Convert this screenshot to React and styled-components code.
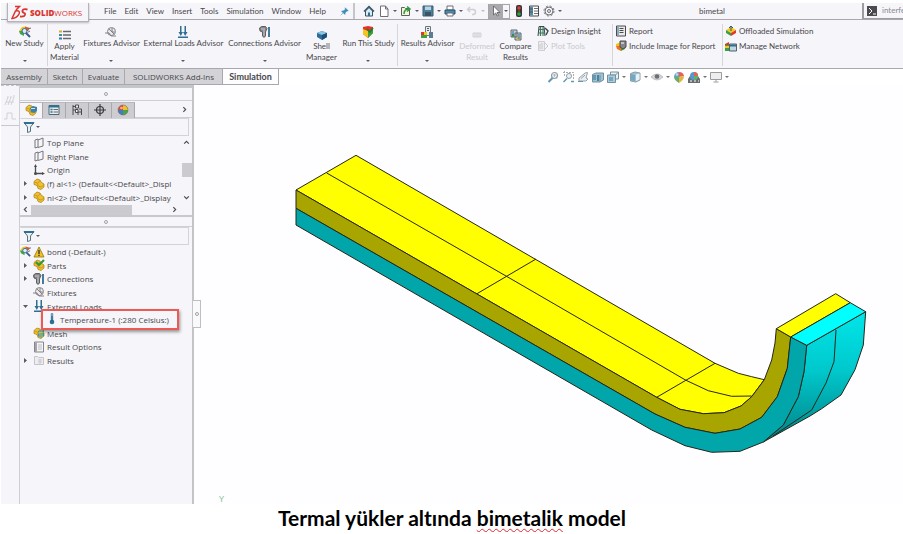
import React from "react";
import styled, { createGlobalStyle } from "styled-components";

const GlobalStyle = createGlobalStyle`
  *, *::after {
    box-sizing: border-box;
  }
  body {
    margin: 0;
    background: #fff;
    color: #48484c;
    font-family: Lato, "Open Sans", sans-serif;
    font-size: 8px;
    line-height: 11px;
  }
  button, input {
    margin: 0;
    padding: 0;
    border: 0;
    background: none;
    color: inherit;
    font: inherit;
  }
  ul {
    margin: 0;
    padding: 0;
    list-style: none;
  }
  svg {
    flex: none;
  }
`;

const Page = styled.div`
  padding: 3px 0 0 1px;
  overflow: hidden;
`;

const TitleBar = styled.header`
  display: flex;
  align-items: center;
  height: 17px;
  background: #f6f5f9;
  border-bottom: 1px solid #a9a9ad;
`;

const Brand = styled.div`
  align-self: flex-start;
  flex: none;
  display: flex;
  align-items: center;
  gap: 2px;
  width: 82px;
  height: 19px;
  margin: 0 15px 0 6px;
  padding-left: 3px;
  position: relative;
  background: #f6f5f9;
  border: 1px solid #b4b4b8;
  border-top: 0;
  box-shadow: 0 1px 2px rgba(0, 0, 0, 0.25);
  color: #d9352f;
  white-space: nowrap;
`;

const BrandName = styled.span`
  font-family: "Open Sans", sans-serif;
  font-size: 8px;
  b {
    font-weight: 800;
  }
`;

const MenuBar = styled.nav`
  display: flex;
  flex: none;
  gap: 8px;
  margin-right: 14px;
`;

const QuickBar = styled.div`
  display: flex;
  flex: none;
  align-items: center;
  gap: 3px;
  height: 16px;
  margin-left: 4px;
  padding-left: 8px;
  border-left: 2px solid #c6c6ca;
`;

const IconButton = styled.button`
  display: flex;
  flex: none;
  align-items: center;
  opacity: ${props => (props.$faded ? 0.35 : 1)};
`;

const SelectTool = styled.div`
  display: flex;
  align-items: center;
  height: 15px;
  gap: 1px;
  padding-right: 1px;
  border: 1px solid #a5a5aa;
  ${IconButton}:first-child {
    height: 13px;
    padding: 0 1px;
    background: #a9a9ae;
  }
`;

const DocumentName = styled.div`
  flex: 1;
  text-align: center;
`;

const SearchBox = styled.label`
  display: flex;
  flex: none;
  align-items: center;
  gap: 4px;
  width: 41px;
  height: 16px;
  padding-left: 2px;
  border-left: 2px solid #9c9ca1;
  border-bottom: 1px solid #9c9ca1;
  overflow: hidden;
  input {
    flex: 1;
    min-width: 0;
    color: #8a8a8e;
  }
`;

const Ribbon = styled.div`
  display: grid;
  grid-template-columns: 46px 34px 60px 84px 78px 36px 58px 60px 39px 38px 78px 110px 1fr;
  height: 49px;
  background: #f6f5f9;
  border-bottom: 1px solid #a9a9ad;
`;

const RibbonCell = styled.div`
  display: flex;
  flex-direction: column;
  align-items: ${props => (props.$list ? "flex-start" : "center")};
  gap: ${props => (props.$list ? "3px" : "0")};
  margin-top: 4px;
  height: 42px;
  padding: ${props => (props.$list ? "1px 0 0 2px" : "0")};
  border-left: 1px solid ${props => (props.$divided ? "#d6d6da" : "transparent")};
`;

const RibbonButton = styled.button`
  display: flex;
  flex-direction: column;
  align-items: center;
  padding-top: ${props => (props.$tall ? "5px" : "2px")};
  white-space: pre;
  color: ${props => (props.$faded ? "#c9c9cd" : "inherit")};
`;

const DropSpace = styled.span`
  display: flex;
  align-items: flex-end;
  height: 14px;
`;

const CommandButton = styled.button`
  display: flex;
  align-items: center;
  gap: 2px;
  height: 12px;
  white-space: nowrap;
  color: ${props => (props.$faded ? "#c9c9cd" : "inherit")};
`;

const TabRow = styled.div`
  display: flex;
  height: 16px;
`;

const CommandTab = styled.button`
  flex: none;
  width: ${props => props.$width}px;
  font-family: ${props => (props.$active ? "inherit" : '"Open Sans", sans-serif')};
  font-size: ${props => (props.$active ? 9 : 8)}px;
  font-weight: ${props => (props.$active ? 700 : 400)};
  border: 1px solid #a9a9ad;
  border-left: 0;
  border-top: 0;
  white-space: nowrap;
  background: ${props => (props.$active ? "#fdfcfe" : "#d3d3d7")};
`;

const ViewTools = styled.div`
  display: flex;
  align-items: center;
  gap: 3px;
  margin-left: 268px;
  opacity: 0.85;
`;

const Workspace = styled.main`
  display: flex;
  min-height: 419px;
`;

const SideStrip = styled.div`
  flex: none;
  width: 18px;
  background: #f6f5f9;
`;

const SideTools = styled.div`
  display: flex;
  flex-direction: column;
  align-items: center;
  gap: 4px;
  height: 41px;
  padding-top: 8px;
  border-top: 1px dashed #c4c4c8;
  border-bottom: 1px solid #c9c9cd;
`;

const Panel = styled.aside`
  flex: none;
  width: 175px;
  background: #f6f5f9;
  border-left: 1px solid #cfcfd3;
  border-right: 2px solid #c3c3c8;
  position: relative;
`;

const PanelTop = styled.div`
  border-top: 3px solid #c3c7ca;
  border-bottom: 2px solid #c9c9cd;
`;

const Grip = styled.div`
  display: flex;
  align-items: center;
  justify-content: center;
  height: ${props => props.$height}px;
  border-bottom: 1px solid #cfcfd3;
  &::after {
    content: "";
    width: 4px;
    height: 4px;
    border: 1px solid #a2a2a6;
    border-radius: 2px;
  }
`;

const PanelTabs = styled.div`
  display: flex;
  align-items: center;
  height: 17px;
  padding-top: 1px;
  border-bottom: 1px solid #cfcfd3;
`;

const PanelTab = styled.button`
  display: flex;
  align-items: center;
  justify-content: center;
  width: 23px;
  height: 16px;
  border-right: 1px solid #a9a9ad;
  border-top: 1px solid #b9b9bd;
  background: ${props => (props.$active ? "#f6f5f9" : "#cdcdd1")};
`;

const MoreTabs = styled.button`
  margin: 0 4px 0 auto;
  display: flex;
`;

const Filter = styled.label`
  display: flex;
  align-items: center;
  gap: 1px;
  height: 18px;
  margin: 0 3px 0 0;
  padding-left: 2px;
  border: 1px solid #d3d3d8;
  border-left-color: transparent;
  input {
    flex: 1;
    min-width: 0;
  }
`;

const TreeArea = styled.div`
  display: flex;
`;

const Tree = styled.ul`
  display: flex;
  flex: 1;
  flex-direction: column;
  min-width: 0;
  height: ${props => props.$height}px;
  font-family: "Open Sans", sans-serif;
`;

const TreeRow = styled.li`
  display: flex;
  flex: 1;
  align-items: center;
  gap: 2px;
  min-height: 0;
  white-space: nowrap;
  position: relative;
`;

const Expander = styled.button`
  display: flex;
  flex: none;
  justify-content: center;
  width: 11px;
`;

/* call-out lying over the neighbouring tree rows */
const Highlight = styled.div`
  position: absolute;
  z-index: 1;
  left: 21px;
  top: -4px;
  display: flex;
  align-items: center;
  gap: 2px;
  width: 138px;
  height: 21px;
  padding-left: 3px;
  background: #f6f5f9;
  border: 2px solid #ec5a56;
  box-shadow: 1px 2px 3px rgba(0, 0, 0, 0.4);
`;

const ScrollColumn = styled.div`
  display: flex;
  flex: none;
  flex-direction: column;
  align-items: center;
  justify-content: space-between;
  width: 11px;
  padding: 3px 0;
`;

const ScrollRow = styled.div`
  display: flex;
  align-items: center;
  height: 11px;
  padding: 0 14px 0 2px;
`;

const Thumb = styled.div`
  background: #cbcbcf;
  width: ${props => props.$width}px;
  height: ${props => props.$height}px;
  margin-right: ${props => (props.$wide ? "auto" : "0")};
  margin-left: ${props => (props.$wide ? "2px" : "0")};
`;

const Handle = styled.button`
  position: absolute;
  left: 173px;
  top: 215px;
  display: flex;
  align-items: center;
  justify-content: center;
  width: 8px;
  height: 28px;
  background: #f9f8fb;
  border: 1px solid #bdbdc2;
  border-left: 0;
`;

const Viewport = styled.section`
  flex: 1;
  min-width: 0;
  background: #fefdff;
  svg {
    display: block;
    width: 100%;
  }
`;

const Caption = styled.h1`
  margin: 0;
  font-size: 21px;
  line-height: 28px;
  font-weight: 700;
  font-variant-ligatures: none;
  text-align: center;
  color: #000;
  span {
    text-decoration: underline wavy #e3262b 1px;
    text-decoration-skip-ink: none;
    text-underline-offset: 2px;
  }
`;

const blue = "#2f6f92";
const grey = "#6e6e73";

const Heat = () => (
  <>
    <path d="M1 4 6 2v4H1z" fill="#f3c31c" />
    <path d="M6 2l5 2v2H6z" fill="#e2342d" />
    <path d="M1 6h5v5L2 9z" fill="#f0711f" />
    <path d="M6 6h5L10 9 6 11z" fill="#3fa93c" />
  </>
);

const Part = () => (
  <>
    <path
      d="M1 3.500L4 1l3 1 1 2 3 2v3l-3 2.500-3-1-1-3-3-1z"
      fill="#f0c02c"
      stroke="#a67d18"
      strokeWidth=".7"
    />
    <path d="M1.500 4l3 1L7.500 3M4.500 5l.5 3 3 1 3-2" stroke="#c4931c" strokeWidth=".8" fill="none" />
  </>
);

const Arrows = () => (
  <path
    d="M3 0h1.500v6H6l-2.200 4L1.500 6H3zM7.500 0H9v6h1.500L8.200 10 6 6h1.500zM1 10.500h10V12H1z"
    fill={blue}
  />
);

const Bolt = () => (
  <>
    <path d="M.5 2l2-1.500h4L8 2.500 6.500 6v4L5 11.500 3.500 10V6L1 5z" fill="#85858a" stroke="#48484d" strokeWidth=".8" />
    <path d="M2 3h4M5 4v6" stroke="#dcdce0" strokeWidth=".8" />
    <path d="M10 1v10" stroke={blue} strokeWidth="1.800" />
  </>
);

const Clip = () => (
  <>
    <circle cx="6.500" cy="5.500" r="4" fill="#e9e9ec" stroke="#88888d" />
    <path d="M0 7h4l2 3h5M4 3l5 5M7 2v4h3" fill="none" stroke="#77777c" strokeWidth=".9" />
  </>
);

const Doc = () => (
  <path d="M2.500 1h5l2.500 3v7.500H2.500zM7.500 1v3H10" fill="#fff" stroke={grey} />
);

const shapes = {
  study: (
    <>
      <path d="M0 5l3-4 3-.5L6 5z" fill="#f0c51e" />
      <path d="M0 5h5v5L1 8z" fill="#47a444" />
      <path d="M6 .5L11 2 9 5H6z" fill="#e2562d" />
      <circle cx="5.500" cy="5" r="2.500" fill="#d6ecf5" stroke={blue} />
      <path d="M7 7l4 4" stroke="#3b5a8c" strokeWidth="2" />
      <path d="M8.500 6.500L11 5M9 3l3-1" stroke="#6e6e73" />
    </>
  ),
  material: (
    <>
      <path d="M0 1.500h3v2H0z" fill="#e3a62b" />
      <path d="M0 5h3v2H0z" fill="#3f8f98" />
      <path d="M0 8.500h3v2H0z" fill="#3c72b0" />
      <path d="M4 2.500h8M4 6h8M4 9.500h8" stroke="#67676c" strokeWidth="1.400" />
    </>
  ),
  fixture: <Clip />,
  loads: <Arrows />,
  bolt: <Bolt />,
  shell: (
    <>
      <path d="M1 4l5-2 5 2v4l-5 3-5-3z" fill="#2b6d9d" />
      <path d="M1 4l5-2 5 2-5 2z" fill="#8dc3e0" />
      <path d="M6 6l5-2v4l-5 3z" fill="#1d4e78" />
    </>
  ),
  run: (
    <>
      <path d="M1 1l5-1 5 1v6l-5 5-5-4z" fill="#e3352c" />
      <path d="M1 3l5 2v7L1 8z" fill="#f1c61e" />
      <path d="M6 6l5-3v4l-5 5z" fill="#39a23a" />
      <path d="M5 3l3 3 3-4" stroke="#1d7e2b" strokeWidth="1.500" fill="none" />
    </>
  ),
  results: (
    <>
      <path d="M4.500.5h5v9h-5z" fill="#e8edf0" stroke="#6a7780" />
      <path d="M6 2.500h2M6 4.500h2" stroke="#59595e" />
      <path d="M0 6h3v3H0z" fill="#e3352c" />
      <path d="M3 6h3v3H3z" fill="#f1c61e" />
      <path d="M0 9h6v3H0z" fill="#39a23a" />
      <path d="M8 6h4v6H8z" fill="#5d7c90" />
    </>
  ),
  deformed: <path d="M2 4h8v4H2zM4 4v4M6 4v4M8 4v4" fill="#ececef" stroke="#d2d2d6" />,
  compare: (
    <>
      <path d="M1 1h6v7H1zM5 4h6v7H5z" fill="#c6ced2" stroke="#566872" />
      <path d="M2 5h2v3H2z" fill="#38a03b" />
      <path d="M7 8h2v3H7z" fill="#e5a91f" />
      <path d="M3 2v5M9 5v5" stroke={blue} />
    </>
  ),
  insight: (
    <>
      <path d="M1 11l1-9.500h5L8 11" fill="#d6e5e1" stroke="#364b50" />
      <path d="M1 8h7M3.500 2v9M6 2v9M2 4.500h5" stroke="#47765f" />
      <path d="M8 3l3 3-2 4" fill="none" stroke="#364b50" strokeWidth="1.400" />
    </>
  ),
  plot: (
    <>
      <path d="M1.500 1.500h6v9h-6z" fill="#ececef" stroke="#cfcfd3" />
      <path d="M3 4v5M5 3v6M7 10l4-4M8 3l3 3" stroke="#c9c9cd" />
    </>
  ),
  report: (
    <>
      <path d="M1.500 1h9v10h-9z" fill="#e9e9ec" stroke="#4b4b50" />
      <path d="M4.500 3.500h4M4.500 5.500h4M4.500 7.500h4" stroke="#4b4b50" />
      <path d="M3 2v8" stroke={blue} />
    </>
  ),
  image: (
    <>
      <Heat />
      <path d="M5 1h6v6l-3 2-3-2z" fill="#86868c" stroke="#4b4b50" />
      <path d="M6 3h3" stroke="#fff" />
    </>
  ),
  offload: (
    <>
      <path d="M1 5l5-3 5 3-5 3z" fill="#f1c61e" />
      <path d="M1 5l5 3v3L1 8z" fill="#39a23a" />
      <path d="M6 8l5-3v3l-5 3z" fill="#e3352c" />
      <path d="M6 1v5M4 3l2-2 2 2" stroke="#26597a" fill="none" />
    </>
  ),
  network: (
    <>
      <path d="M0 4h4v7H0z" fill="#39a23a" />
      <path d="M0 4l4-2v3H0z" fill="#e3352c" />
      <path d="M0 6h4v2H0z" fill="#f1c61e" />
      <path d="M4.500 4h7v7h-7z" fill="#c3d5de" stroke="#476577" />
      <path d="M5 5.500h6" stroke={blue} strokeWidth="2" />
    </>
  ),
  pin: (
    <path d="M7 1l4 4-2 .5-2 2L6.500 10 2 5.500 5 5l2-2zM4 8l-3 3" fill="#3c8cba" stroke="#3c8cba" strokeWidth=".7" />
  ),
  home: (
    <>
      <path d="M2.500 6v5h7V6L6 2.500z" fill="#dfe9ef" stroke="#33566b" />
      <path d="M1 6.500l5-5 5 5" stroke="#33566b" strokeWidth="1.500" fill="none" />
      <path d="M5 7.500h2V11H5z" fill={blue} />
    </>
  ),
  doc: <Doc />,
  open: (
    <>
      <path d="M1.500 2.500h3l1 1h4v7h-8z" fill="#f3f3e4" stroke="#5d6450" />
      <path d="M4 9c0-4 2-5 5-5M7 1.500L10 4 7 6.500" stroke="#34993a" strokeWidth="1.500" fill="none" />
    </>
  ),
  save: (
    <>
      <path d="M1 1h10v10H1z" fill="#4c7f9c" stroke="#3b5f74" />
      <path d="M3 1.500h6V5H3z" fill="#b9d4e1" />
      <path d="M3 7h6v4H3z" fill="#3d5361" />
    </>
  ),
  print: (
    <>
      <path d="M3 1h6v4H3z" fill="#fff" stroke={grey} />
      <path d="M1 5h10v4H1z" fill="#4688ad" stroke="#2b5069" />
      <path d="M3 8h6v3H3z" fill="#fff" stroke={grey} />
    </>
  ),
  undo: (
    <path d="M4 2L1.500 4.500 4 7M2 4.500h5a2.500 2.500 0 010 5H6" stroke="#88888d" strokeWidth="1.400" fill="none" />
  ),
  cursor: <path d="M3.500 1v9l2.200-2 1.500 3 1.300-.7L7 7.500h3z" fill="#fff" stroke="#5b5b60" strokeWidth=".8" />,
  traffic: (
    <>
      <rect x="3" y="0" width="6" height="12" rx="2" fill="#33373a" />
      <circle cx="6" cy="3" r="1.800" fill="#e23a30" />
      <circle cx="6" cy="6" r="1" fill="#6b5b20" />
      <circle cx="6" cy="9" r="1.800" fill="#31a544" />
    </>
  ),
  props: (
    <>
      <path d="M1.500 1h9v10h-9z" fill="#fff" stroke="#4b4b50" />
      <path d="M2 1.500h3v9H2z" fill="#5a8aa4" />
      <path d="M6 3.500h4M6 6h4M6 8.500h4M2 4h3M2 7h3" stroke="#4b4b50" strokeWidth=".8" />
    </>
  ),
  gear: (
    <>
      <circle cx="6" cy="6" r="4" fill="none" stroke={grey} strokeWidth="1" />
      <circle cx="6" cy="6" r="1.500" fill="none" stroke={grey} />
      <circle cx="6" cy="6" r="5" fill="none" stroke={grey} strokeWidth="1" strokeDasharray="2 1.930" />
    </>
  ),
  terminal: (
    <>
      <path d="M1 1h10v10H1z" fill="#4a4a4f" />
      <path d="M3 3l3 3-3 3M7 9h3" stroke="#fff" fill="none" />
    </>
  ),
  zoomFit: (
    <>
      <circle cx="7.500" cy="4.500" r="3" fill="#e7f0f5" stroke="#7f8f99" strokeWidth="1.200" />
      <path d="M6 4h3M7.500 3v3" stroke="#7f8f99" strokeWidth=".6" />
      <path d="M5.500 7l-4 4" stroke="#4b86a8" strokeWidth="2" />
    </>
  ),
  zoomArea: (
    <>
      <path d="M1 1.500h10.500V8M2.500 0v5" stroke="#a0a0a5" fill="none" strokeDasharray="2 1" />
      <circle cx="7" cy="5" r="2.500" fill="#e7f0f5" stroke="#7f8f99" />
      <path d="M5 7.500l-3.500 3.500M9 10.500h3" stroke="#4b86a8" strokeWidth="1.500" />
    </>
  ),
  prevView: (
    <>
      <path d="M2 7l6-5 2.500-.5L9 7l2 1-2 2H2z" fill="#e6ecef" stroke="#87959d" />
      <path d="M4 7.500L8 4" stroke="#87959d" />
      <path d="M1 10.500h5" stroke="#4b86a8" />
    </>
  ),
  section: (
    <>
      <path d="M.5 3.500L4 2h7.500v7L8 11H.5z" fill="#8bb8cd" stroke="#5a7c8e" />
      <path d="M4 2v7M1 4h3v5H1z" fill="#4d87a6" />
      <path d="M5 4h2v6H5z" fill="#2f6a8b" />
      <path d="M8 4v6" stroke="#5a7c8e" />
    </>
  ),
  cube: (
    <>
      <path d="M3.500 1h8v7h-3V4h-5z" fill="#e4eff4" stroke="#5f7d8e" />
      <path d="M.5 4h8v7.500h-8z" fill="#9cc4d7" stroke="#5f7d8e" />
      <path d="M3.500 1v3M8.500 4l3-3" stroke="#5f7d8e" />
      <path d="M2 6h4v4H2z" fill="#5b98b7" />
    </>
  ),
  display: (
    <>
      <path d="M1.500 2.500L6 1l5 1v7l-4 2-5.500-1z" fill="#8fb8cb" stroke="#7a8f9b" />
      <path d="M2 3l4 1v6L2 9.500z" fill="#5e9aba" />
      <path d="M7 3.500l3.500-1v6L7 10z" fill="#e4f1f7" />
    </>
  ),
  eye: (
    <>
      <path d="M0 6q6-6 12 0-6 6-12 0z" fill="#cfcfd3" stroke="#a2a2a7" strokeWidth=".7" />
      <circle cx="6" cy="5.500" r="2.300" fill="#50585e" />
    </>
  ),
  ball: (
    <>
      <circle cx="6" cy="6" r="5" fill="#e2453a" />
      <path d="M6 6V1a5 5 0 015 5z" fill="#f0c420" />
      <path d="M6 6h5a5 5 0 01-5 5z" fill="#40a648" />
      <path d="M6 6v5a5 5 0 01-5-5z" fill="#3d7ec0" />
      <circle cx="6" cy="6" r="5" fill="none" stroke="#77777c" strokeWidth=".6" />
      <circle cx="4.500" cy="4" r="1.300" fill="#fff" opacity=".6" />
    </>
  ),
  appearance: (
    <>
      <path d="M6 6L1 6a5 5 0 015-5z" fill="#4d90c6" />
      <path d="M6 6V1a5 5 0 015 4z" fill="#e2453a" />
      <path d="M6 6l5-1q0 4-5 7z" fill="#e0a81f" />
      <path d="M6 6v6Q1 9 1 6z" fill="#48a450" />
      <circle cx="4" cy="3.500" r="1.300" fill="#fff" opacity=".6" />
    </>
  ),
  scene: (
    <>
      <path d="M0 8l2-3h8l2 3v4H0z" fill="#50545a" />
      <path d="M2 10h2M6 10h2M10 10h1" stroke="#fff" />
      <circle cx="6" cy="5" r="4" fill="#3b86c5" />
      <path d="M6 5V1a4 4 0 014 4z" fill="#e2453a" />
      <path d="M6 5h4a4 4 0 01-4 4z" fill="#40a648" />
    </>
  ),
  monitor: (
    <>
      <path d="M.5 1.500h11v7H.5z" fill="#e9ecee" stroke="#8b8b90" />
      <path d="M6 8.500v2M3.500 11h5" stroke="#8b8b90" />
    </>
  ),
  assembly: (
    <>
      <Part />
      <path d="M5 4l3-2 4 1v4L9 9 6 8z" fill="#3c82a8" />
      <path d="M6 4.500h4" stroke="#cfe5f0" />
    </>
  ),
  manager: (
    <>
      <path d="M1 1.500h10v9H1z" fill="#e4ecf0" stroke="#4d6878" />
      <path d="M1 2.500h10" stroke={blue} strokeWidth="2" />
      <path d="M2.500 5.500h2M2.500 8h2" stroke={blue} strokeWidth="1.500" />
      <path d="M5.500 5.500H10M5.500 8H10" stroke="#6a6a6f" />
    </>
  ),
  config: (
    <>
      <path d="M2 1v10M2 2.500h3M2 6h3" stroke="#4b4b50" />
      <path d="M4.500 1h3v3h-3zM4.500 5.500h2.500v3H4.500z" fill="#eee" stroke="#4b4b50" />
      <path d="M8 5h2.500v6M7 11V8h3" stroke="#4b4b50" fill="none" />
    </>
  ),
  target: (
    <>
      <circle cx="6" cy="6" r="3.500" fill="none" stroke="#3c3c40" strokeWidth="1.200" />
      <path d="M6 0v12M0 6h12" stroke="#3c3c40" strokeWidth="1.200" />
    </>
  ),
  funnel: (
    <>
      <path d="M1 1.500h10L7.500 6v4.500l-3 1V6z" fill="#e9f0f4" stroke="#56727f" />
      <path d="M1 2h10" stroke={blue} strokeWidth="2" />
    </>
  ),
  plane: (
    <path d="M2 3l3-1v8l-3 1zM5 3l5-2v8l-5 1.500" fill="none" stroke="#77777c" />
  ),
  origin: (
    <>
      <path d="M2.500 2v7.500H10" fill="none" stroke="#4b4b50" strokeWidth="1.300" />
      <path d="M1 3l1.500-3L4 3zM9 8l3 1.500L9 11z" fill="#4b4b50" />
      <circle cx="2.500" cy="9.500" r="1.500" fill="#4b4b50" />
    </>
  ),
  part: <Part />,
  partOk: (
    <>
      <Part />
      <path d="M3 3l3 3 5-5" stroke="#319a3c" strokeWidth="2.200" fill="none" />
    </>
  ),
  warning: (
    <>
      <path d="M6 1l5 10H1z" fill="#f3c21d" stroke="#8f7115" strokeWidth=".8" strokeLinejoin="round" />
      <path d="M6 4v4M6 8.800V10" stroke="#2f2f33" strokeWidth="1.300" />
    </>
  ),
  thermo: (
    <>
      <path d="M6 1v8" stroke="#6ba0bd" strokeWidth="2.500" strokeLinecap="round" />
      <circle cx="6" cy="9" r="2.300" fill={blue} />
      <path d="M6 3v5" stroke="#1c5878" />
    </>
  ),
  mesh: (
    <>
      <Part />
      <path d="M5 4l6-1v6l-4 2-2-2z" fill="#3f93a6" />
      <path d="M5 6l6-1M7 4v7M9 3v7" stroke="#e9d04a" strokeWidth=".8" />
    </>
  ),
  options: (
    <>
      <path d="M1.500 1h9v10h-9z" fill="#f4f4f6" stroke="#85858a" />
      <path d="M3 1.500v9" stroke="#8c8c91" strokeWidth="1.500" />
      <path d="M5 4h4M5 6h4M5 8h4" stroke="#bcbcc1" />
    </>
  ),
  folder: (
    <>
      <path d="M1.500 2.500h3l1 1h5v7h-9z" fill="#ededf0" stroke="#c4c4c9" />
      <path d="M5 6h4M5 8h4M7 5v5" stroke="#c9c9ce" />
    </>
  ),
  sideLoads: (
    <path d="M1 11l3-8M4 11l3-8M7 11l3-8M3 3h2M6 3h2M9 2h2M2 8h8" stroke="#d2d2d7" fill="none" />
  ),
  sidePulse: <path d="M0 9h3V3h5v6h4" stroke="#d2d2d7" fill="none" />
};

const Icon = ({ name, size = 12 }) => (
  <svg width={size} height={size} viewBox="0 0 12 12" fill="none" aria-hidden="true">
    {shapes[name]}
  </svg>
);

const Caret = () => (
  <svg width="4" height="4" viewBox="0 0 4 4" aria-hidden="true">
    <path d="M0 1h4L2 3z" fill="#5a5a5f" />
  </svg>
);

const chevrons = {
  up: "M1 4l2-2 2 2",
  down: "M1 2l2 2 2-2",
  left: "M4 1L2 3l2 2",
  right: "M2 1l2 2-2 2"
};

const Chevron = ({ to }) => (
  <svg width="7" height="7" viewBox="0 0 6 6" aria-hidden="true">
    <path d={chevrons[to]} fill="none" stroke="#4b4b50" />
  </svg>
);

const menus = ["File", "Edit", "View", "Insert", "Tools", "Simulation", "Window", "Help"];

const quickTools = [
  { icon: "home", label: "Home" },
  { icon: "doc", label: "New", drop: true },
  { icon: "open", label: "Open", drop: true },
  { icon: "save", label: "Save", drop: true },
  { icon: "print", label: "Print", drop: true },
  { icon: "undo", label: "Undo", drop: true, faded: true }
];

const quickToolsEnd = [
  { icon: "traffic", label: "Rebuild" },
  { icon: "props", label: "File Properties" },
  { icon: "gear", label: "Options", drop: true }
];

const ribbonButtons = [
  { icon: "study", label: "New Study", drop: true },
  { icon: "material", label: "Apply\nMaterial", divided: true },
  { icon: "fixture", label: "Fixtures Advisor", drop: true },
  { icon: "loads", label: "External Loads Advisor", drop: true },
  { icon: "bolt", label: "Connections Advisor", drop: true },
  { icon: "shell", label: "Shell\nManager" },
  { icon: "run", label: "Run This Study", drop: true },
  { icon: "results", label: "Results Advisor", drop: true, divided: true },
  { icon: "deformed", label: "Deformed\nResult", faded: true },
  { icon: "compare", label: "Compare\nResults" }
];

const ribbonLists = [
  {
    items: [
      { icon: "insight", label: "Design Insight" },
      { icon: "plot", label: "Plot Tools", faded: true }
    ]
  },
  {
    divided: true,
    items: [
      { icon: "report", label: "Report" },
      { icon: "image", label: "Include Image for Report" }
    ]
  },
  {
    divided: true,
    items: [
      { icon: "offload", label: "Offloaded Simulation" },
      { icon: "network", label: "Manage Network" }
    ]
  }
];

const commandTabs = [
  { label: "Assembly", width: 47 },
  { label: "Sketch", width: 35 },
  { label: "Evaluate", width: 42 },
  { label: "SOLIDWORKS Add-Ins", width: 98 },
  { label: "Simulation", width: 56, active: true }
];

const viewTools = [
  { icon: "zoomFit", label: "Zoom to Fit" },
  { icon: "zoomArea", label: "Zoom to Area" },
  { icon: "prevView", label: "Previous View" },
  { icon: "section", label: "Section View" },
  { icon: "cube", label: "View Orientation", drop: true },
  { icon: "display", label: "Display Style", drop: true },
  { icon: "eye", label: "Hide/Show Items", drop: true },
  { icon: "appearance", label: "Edit Appearance" },
  { icon: "scene", label: "Apply Scene", drop: true },
  { icon: "monitor", label: "View Settings", drop: true }
];

const panelTabs = ["assembly", "manager", "config", "target", "ball"];

const modelTree = [
  { icon: "plane", label: "Top Plane" },
  { icon: "plane", label: "Right Plane" },
  { icon: "origin", label: "Origin" },
  { icon: "part", label: "(f) al<1> (Default<<Default>_Displ", expand: "right" },
  { icon: "part", label: "ni<2> (Default<<Default>_Display", expand: "right" }
];

const studyTree = [
  { icon: "warning", label: "bond (-Default-)", lead: "study" },
  { icon: "partOk", label: "Parts", expand: "right" },
  { icon: "bolt", label: "Connections", expand: "right" },
  { icon: "fixture", label: "Fixtures" },
  { icon: "loads", label: "External Loads", expand: "down" },
  { icon: "thermo", label: "Temperature-1 (:280 Celsius:)", highlight: true },
  { icon: "mesh", label: "Mesh" },
  { icon: "options", label: "Result Options" },
  { icon: "folder", label: "Results", expand: "right" }
];

const Tool = ({ icon, label, drop, faded }) => (
  <>
    <IconButton aria-label={label} $faded={faded}>
      <Icon name={icon} />
    </IconButton>
    {drop && (
      <IconButton aria-label={`${label} menu`} $faded={faded}>
        <Caret />
      </IconButton>
    )}
  </>
);

const Row = ({ item }) => {
  if (item.highlight) {
    return (
      <TreeRow>
        <Highlight>
          <Icon name={item.icon} />
          {item.label}
        </Highlight>
      </TreeRow>
    );
  }
  return (
    <TreeRow>
      {item.lead ? (
        <Icon name={item.lead} size={11} />
      ) : (
        <Expander aria-label={item.expand ? `Toggle ${item.label}` : undefined} as={item.expand ? "button" : "span"}>
          {item.expand && (
            <svg width="5" height="5" viewBox="0 0 5 5" aria-hidden="true">
              <path d={item.expand === "down" ? "M0 1h5L2.500 4z" : "M1 0v5l3-2.500z"} fill="#5a5a5f" />
            </svg>
          )}
        </Expander>
      )}
      <Icon name={item.icon} />
      {item.label}
    </TreeRow>
  );
};

const FilterBox = ({ label }) => (
  <Filter>
    <Icon name="funnel" />
    <Caret />
    <input type="text" aria-label={label} />
  </Filter>
);

const Model = () => (
  <svg viewBox="194 85 709 419" role="img" aria-label="Bimetal strip model">
    <defs>
      <linearGradient id="bend" x1="0" y1="0" x2="0" y2="1">
        <stop offset="0" stopColor="#00e6ea" />
        <stop offset="0.450" stopColor="#00c8cc" />
        <stop offset="1" stopColor="#008286" />
      </linearGradient>
    </defs>
    <g stroke="#26261a" strokeWidth="1" strokeLinejoin="round">
      <path
        fill="#ffff00"
        d="M296 190L356 155.300 715 363.300 738.300 373.300 751.700 376.700 764.300 379.700 751.700 396.700 741 406 724 412.700 703.300 413.700 680 409.300 656.700 397.300z"
      />
      <path
        fill="url(#bend)"
        d="M763.300 442L783.300 425 798.300 396.700 804 371.700 806.700 345.300 865.700 311.700 863.300 345 855 369.700 841 395 821.700 408.700 810 416z"
      />
      <path
        fill="#a8a500"
        d="M296 190L656.700 397.300 680 409.300 703.300 413.700 724 412.700 741 406 751.700 396.700 764.300 379.700 771.700 360 775 343 776.300 328.700 790.700 337 787.300 368.300 777.300 396.700 761.700 417.300 740 429 715 433.300 685 427.300 655 414 296 208.300z"
      />
      <path
        fill="#00a6aa"
        d="M296 208.300L655 414 685 427.300 715 433.300 740 429 761.700 417.300 777.300 396.700 787.300 368.300 790.700 337 806.700 345.300 804 371.700 798.300 396.700 783.300 425 763.300 442 740 451.300 711.700 452.300 685 445.700 651.700 430 296 225z"
      />
      <path fill="#ffff00" d="M776.300 328.700L835.700 293.700 850.300 302.700 790.700 337z" />
      <path fill="#00ffff" d="M790.700 337L850.300 302.700 865.700 311.700 806.700 345.300z" />
      <path
        fill="none"
        d="M326.700 173L506 276 686 380.300 708.300 390.700 731.700 396.300 751.700 396M536 259L477 293.700M715 363.300L656.700 397.300"
      />
      <path fill="none" d="M836 330L834 361.700 826 383 811.700 410 773 436" />
    </g>
    <text x="219" y="502" fontSize="8" fill="#7fc08a">
      Y
    </text>
  </svg>
);

const App = () => (
  <>
    <GlobalStyle />
    <Page>
      <TitleBar>
        <Brand>
          <svg width="17" height="15" viewBox="0 0 17 15" fill="none" stroke="#d9352f" aria-hidden="true">
            <path d="M4 1.500h4.500L5 5M1 13.500L4.500 6Q9.500 5 8 9 6 13 1 13.500z" strokeWidth="1.500" />
            <path d="M16.500 4.500q-4.500-1-5 1t2.500 3q1 3.500-5 3" strokeWidth="1.800" />
          </svg>
          <BrandName>
            <b>SOLID</b>WORKS
          </BrandName>
        </Brand>
        <MenuBar>
          {menus.map(menu => (
            <button key={menu}>{menu}</button>
          ))}
        </MenuBar>
        <IconButton aria-label="Pin menu">
          <Icon name="pin" size={9} />
        </IconButton>
        <QuickBar>
          {quickTools.map(tool => (
            <Tool key={tool.icon} {...tool} />
          ))}
          <SelectTool>
            <Tool icon="cursor" label="Select" drop />
          </SelectTool>
          {quickToolsEnd.map(tool => (
            <Tool key={tool.icon} {...tool} />
          ))}
        </QuickBar>
        <DocumentName>bimetal</DocumentName>
        <SearchBox>
          <Icon name="terminal" />
          <input type="text" aria-label="Search commands" defaultValue="interfer" />
        </SearchBox>
      </TitleBar>

      <Ribbon>
        {ribbonButtons.map(({ icon, label, drop, divided, faded }) => (
          <RibbonCell key={label} $divided={divided}>
            <RibbonButton $tall={!drop} $faded={faded}>
              <Icon name={icon} />
              {label}
              {drop && (
                <DropSpace>
                  <Caret />
                </DropSpace>
              )}
            </RibbonButton>
          </RibbonCell>
        ))}
        {ribbonLists.map(({ items, divided }) => (
          <RibbonCell key={items[0].label} $list $divided={divided}>
            {items.map(({ icon, label, faded }) => (
              <CommandButton key={label} $faded={faded}>
                <Icon name={icon} />
                {label}
              </CommandButton>
            ))}
          </RibbonCell>
        ))}
      </Ribbon>

      <TabRow>
        {commandTabs.map(({ label, width, active }) => (
          <CommandTab key={label} $width={width} $active={active}>
            {label}
          </CommandTab>
        ))}
        <ViewTools>
          {viewTools.map(tool => (
            <Tool key={tool.icon} {...tool} />
          ))}
        </ViewTools>
      </TabRow>

      <Workspace>
        <SideStrip>
          <SideTools>
            <Icon name="sideLoads" />
            <Icon name="sidePulse" />
          </SideTools>
        </SideStrip>
        <Panel>
          <PanelTop>
            <Grip $height={13} />
            <PanelTabs>
              {panelTabs.map((icon, i) => (
                <PanelTab key={icon} aria-label={icon} $active={i === 0}>
                  <Icon name={icon} />
                </PanelTab>
              ))}
              <MoreTabs aria-label="More tabs">
                <Chevron to="right" />
              </MoreTabs>
            </PanelTabs>
            <FilterBox label="Filter model tree" />
            <TreeArea>
              <Tree $height={68}>
                {modelTree.map(item => (
                  <Row key={item.label} item={item} />
                ))}
              </Tree>
              <ScrollColumn>
                <Chevron to="up" />
                <Thumb $width={10} $height={14} />
                <Chevron to="down" />
              </ScrollColumn>
            </TreeArea>
            <ScrollRow>
              <Chevron to="left" />
              <Thumb $width={101} $height={10} $wide />
              <Chevron to="right" />
            </ScrollRow>
          </PanelTop>
          <Grip $height={10} />
          <FilterBox label="Filter study tree" />
          <Tree $height={122}>
            {studyTree.map(item => (
              <Row key={item.label} item={item} />
            ))}
          </Tree>
          <Handle aria-label="Collapse panel">
            <svg width="4" height="4" viewBox="0 0 4 4" aria-hidden="true">
              <circle cx="2" cy="2" r="1.500" fill="none" stroke="#a2a2a6" />
            </svg>
          </Handle>
        </Panel>
        <Viewport>
          <Model />
        </Viewport>
      </Workspace>

      <Caption>
        Termal yükler altında <span>bimetalik</span> model
      </Caption>
    </Page>
  </>
);

export default App;
